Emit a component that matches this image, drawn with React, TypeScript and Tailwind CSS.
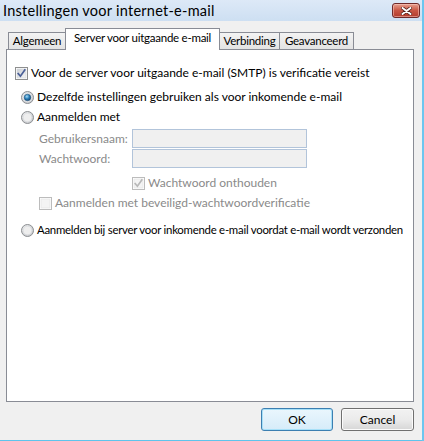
import React from "react";

const font = "font-['Lato',sans-serif]";

function CheckBox({ checked, disabled }: { checked?: boolean; disabled?: boolean }) {
  const border = disabled ? "#bcbcbc" : "#8e8f8f";
  const check = disabled ? "#b8b8b8" : "#4a5f97";
  const gid = disabled ? "cbd" : "cbn";
  return (
    <svg width="13" height="13" viewBox="0 0 13 13" className="shrink-0">
      <defs>
        <linearGradient id={gid} x1="0" y1="0" x2="1" y2="1">
          <stop offset="0" stopColor={disabled ? "#f4f4f4" : "#cbcfd5"} />
          <stop offset="1" stopColor={disabled ? "#f4f4f4" : "#f6f6f6"} />
        </linearGradient>
      </defs>
      <rect x="0.5" y="0.5" width="12" height="12" fill="#ffffff" stroke={border} />
      <rect x="2" y="2" width="9" height="9" fill={`url(#${gid})`} stroke={disabled ? "#e2e2e2" : "#d0d3d8"} strokeWidth="0.6" />
      {checked && (
        <path d="M3.2 6.6 L5.4 9.2 L9.8 3" fill="none" stroke={check} strokeWidth="1.7" strokeLinecap="square" />
      )}
    </svg>
  );
}

function Radio({ checked }: { checked?: boolean }) {
  return (
    <svg width="13" height="13" viewBox="0 0 13 13" className="shrink-0">
      <defs>
        <radialGradient id="rbg" cx="0.4" cy="0.35" r="0.7">
          <stop offset="0" stopColor="#f4f4f4" />
          <stop offset="1" stopColor="#c4c8cc" />
        </radialGradient>
        <radialGradient id="rdot" cx="0.4" cy="0.35" r="0.7">
          <stop offset="0" stopColor="#a8dcf6" />
          <stop offset="0.5" stopColor="#2a7fb8" />
          <stop offset="1" stopColor="#0f3f6b" />
        </radialGradient>
      </defs>
      <circle cx="6.5" cy="6.5" r="6" fill="url(#rbg)" stroke="#8d8f92" />
      <circle cx="6.5" cy="6.5" r="4.3" fill="#eeeeee" stroke="#d6d8db" strokeWidth="0.6" />
      {checked && <circle cx="6.5" cy="6.5" r="3.3" fill="url(#rdot)" stroke="#1a4a74" strokeWidth="0.5" />}
    </svg>
  );
}

export default function App() {
  return (
    <div className={`${font} flex h-[441px] w-[424px] overflow-hidden bg-[#f0f0f0] text-[12px] leading-[16px]`}>
      <div className="flex w-[422px] flex-col">
        {/* Title bar */}
        <div className="flex h-[21px] shrink-0 items-start justify-between bg-gradient-to-b from-[#dde9f7] to-[#cddff2] pl-[3px] pr-[2px]">
          <span className="mt-[2px] whitespace-nowrap text-[14.5px] leading-[17px] tracking-[0.25px] text-black">Instellingen voor internet-e-mail</span>
          <div className="mt-[3px] flex h-[15px] w-[28px] items-center justify-center rounded-[3px] border border-[#6f2a2a] bg-gradient-to-b from-[#e6a090] via-[#c85543] to-[#b23b2c] shadow-[inset_0_0_0_1px_rgba(255,210,200,0.5)]">
            <svg width="11" height="8" viewBox="0 0 11 8">
              <path d="M1.5 1 L9.5 7 M9.5 1 L1.5 7" stroke="#4a1a14" strokeWidth="3.4" strokeLinecap="round" />
              <path d="M1.5 1 L9.5 7 M9.5 1 L1.5 7" stroke="#ffffff" strokeWidth="2" strokeLinecap="round" />
            </svg>
          </div>
        </div>

        {/* Body */}
        <div className="flex flex-1 flex-col pl-[6px] pr-[8px]">
          {/* tabs */}
          <div className="mt-[7px] flex items-end pl-[2px] text-[11.5px] tracking-[-0.25px]">
            <div className="flex h-[17px] w-[58px] justify-center whitespace-nowrap border border-b-0 border-[#898c95] bg-gradient-to-b from-[#f3f3f3] to-[#e3e3e3]">
              Algemeen
            </div>
            <div className="relative z-10 mb-[-1px] ml-[-1px] flex h-[22px] w-[155px] justify-center whitespace-nowrap border border-b-0 border-[#898c95] bg-white pt-[1px]">
              Server voor uitgaande e-mail
            </div>
            <div className="ml-[-1px] flex h-[17px] w-[61px] justify-center whitespace-nowrap border border-b-0 border-[#898c95] bg-gradient-to-b from-[#f3f3f3] to-[#e3e3e3]">
              Verbinding
            </div>
            <div className="ml-[-1px] flex h-[17px] w-[75px] justify-center whitespace-nowrap border border-b-0 border-[#898c95] bg-gradient-to-b from-[#f3f3f3] to-[#e3e3e3]">
              Geavanceerd
            </div>
          </div>
          {/* panel */}
          <div className="flex h-[353px] flex-col whitespace-nowrap border border-[#898c95] bg-white pl-[8px] text-black">
            <div className="mt-[15px] flex items-center gap-[3px]">
              <CheckBox checked />
              <span>Voor de server voor uitgaande e-mail (SMTP) is verificatie vereist</span>
            </div>
            <div className="ml-[6px] mt-[8px] flex items-center gap-[3px]">
              <Radio checked />
              <span>Dezelfde instellingen gebruiken als voor inkomende e-mail</span>
            </div>
            <div className="ml-[6px] mt-[4px] flex items-center gap-[3px]">
              <Radio />
              <span>Aanmelden met</span>
            </div>
            <div className="mt-[4px] flex items-center">
              <span className="w-[117px] shrink-0 pl-[24px] text-[#8a8a8a]">Gebruikersnaam:</span>
              <div className="h-[19px] w-[175px] border border-[#b2c4da] bg-[#f0f0f0]" />
            </div>
            <div className="mt-[1px] flex items-center">
              <span className="w-[117px] shrink-0 pl-[24px] text-[#8a8a8a]">Wachtwoord:</span>
              <div className="h-[19px] w-[175px] border border-[#b2c4da] bg-[#f0f0f0]" />
            </div>
            <div className="ml-[117px] mt-[7px] flex items-center gap-[3px]">
              <CheckBox checked disabled />
              <span className="text-[#8a8a8a]">Wachtwoord onthouden</span>
            </div>
            <div className="ml-[24px] mt-[4px] flex items-center gap-[3px]">
              <CheckBox disabled />
              <span className="text-[#8a8a8a]">Aanmelden met beveiligd-wachtwoordverificatie</span>
            </div>
            <div className="ml-[6px] mt-[11px] flex items-center gap-[3px]">
              <Radio />
              <span className="text-[11.4px] tracking-[-0.25px]">Aanmelden bij server voor inkomende e-mail voordat e-mail wordt verzonden</span>
            </div>
          </div>
          {/* buttons */}
          <div className="mt-[6px] flex justify-end gap-[8px]">
            <div className="flex h-[23px] w-[72px] items-center justify-center rounded-[3px] border border-[#3c7fb1] bg-gradient-to-b from-[#eaf6fd] to-[#d6ecf9] text-black shadow-[inset_0_0_0_1px_#a7e0f8]">
              OK
            </div>
            <div className="flex h-[23px] w-[73px] items-center justify-center rounded-[3px] border border-[#707070] bg-gradient-to-b from-[#f2f2f2] via-[#ebebeb] to-[#d6d6d6] text-black shadow-[inset_0_0_0_1px_#fbfbfb]">
              Cancel
            </div>
          </div>
        </div>
        <div className="h-[1px] shrink-0 bg-[#5fc4ec]" />
      </div>
      <div className="w-[2px] bg-[#6cc6ef]" />
    </div>
  );
}
